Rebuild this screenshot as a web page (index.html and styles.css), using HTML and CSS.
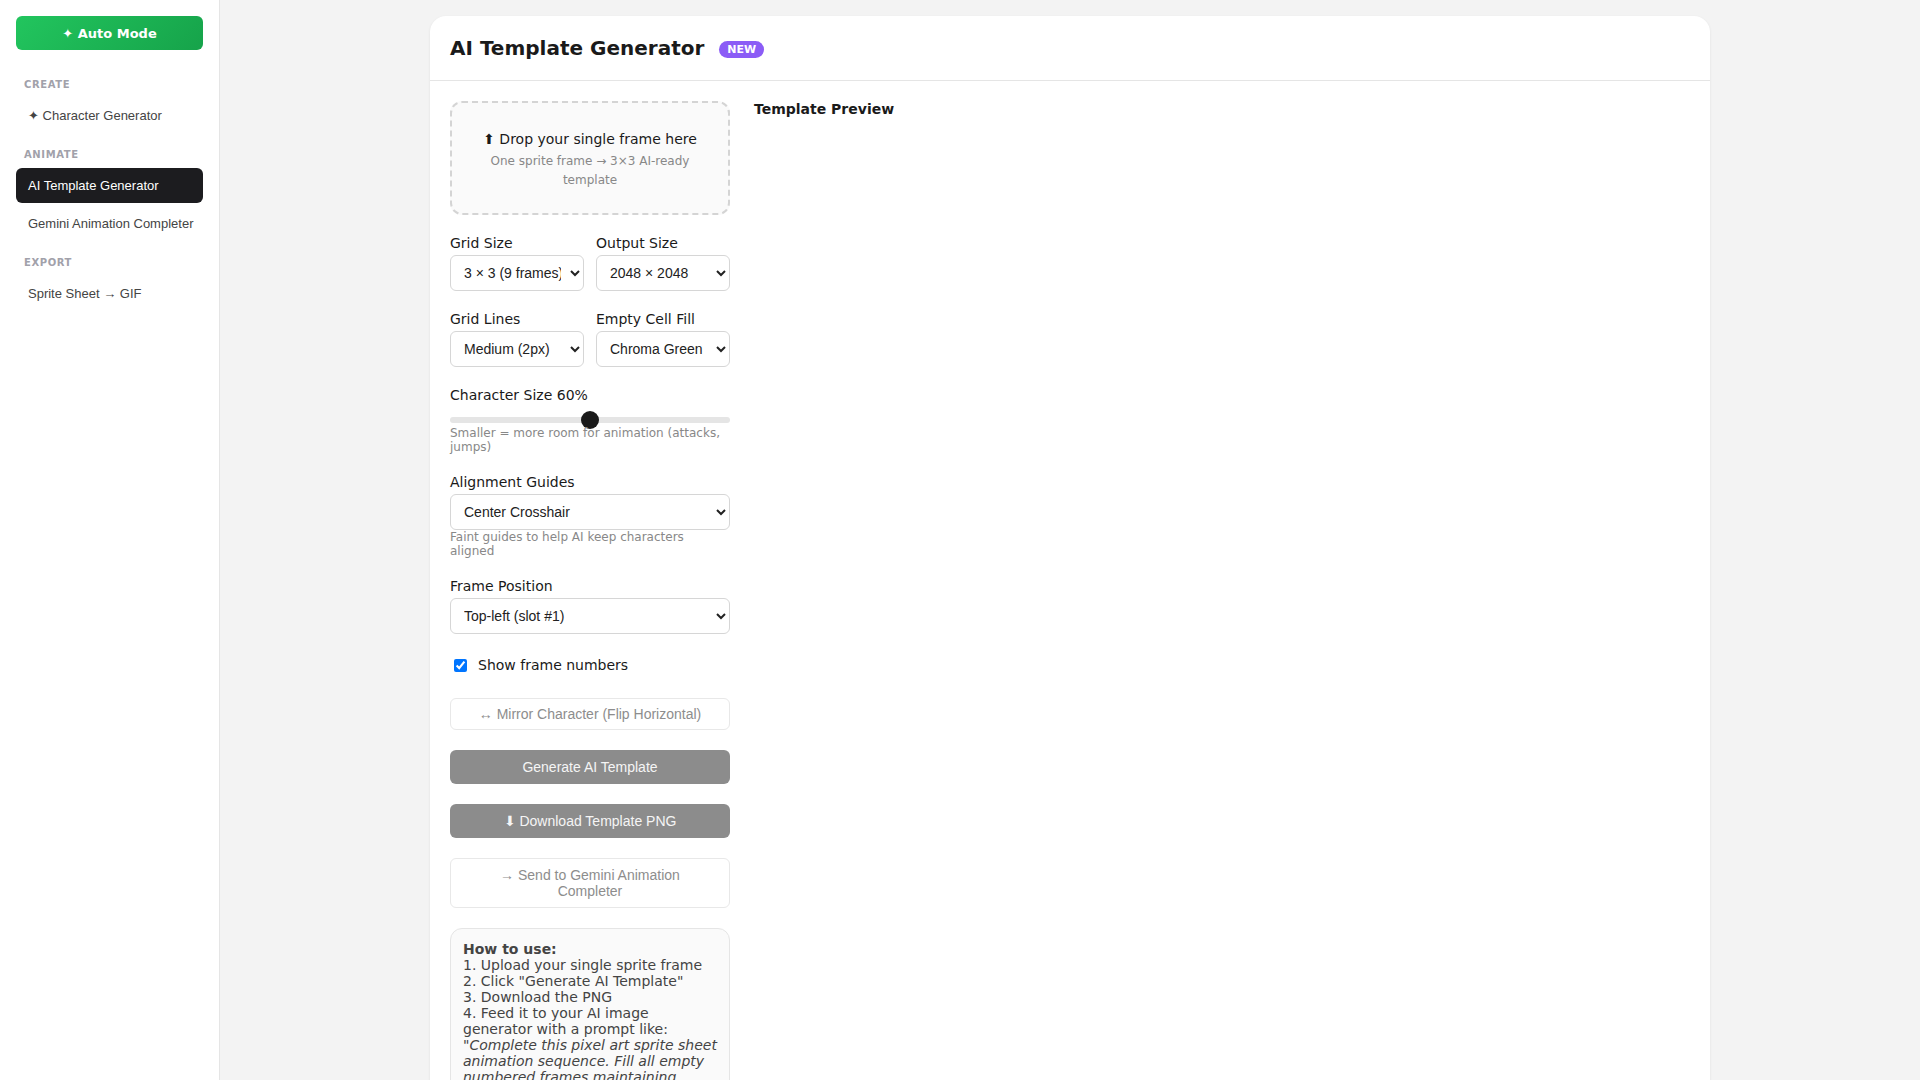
FILE: index.html
```html
<!DOCTYPE html>
<html lang="en">
<head>
  <meta charset="UTF-8" />
  <meta name="viewport" content="width=device-width, initial-scale=1.0"/>
  <title>AI Template Generator</title>
  <link rel="stylesheet" href="styles.css">
</head>
<body>
<div class="app">
  <aside class="sidebar">
    <button class="auto-mode">✦ Auto Mode</button>

    <div class="nav-heading first">CREATE</div>
    <div class="nav-item">✦ Character Generator</div>

    <div class="nav-heading">ANIMATE</div>
    <div class="nav-item active">AI Template Generator</div>
    <div class="nav-item">Gemini Animation Completer</div>

    <div class="nav-heading">EXPORT</div>
    <div class="nav-item">Sprite Sheet → GIF</div>
  </aside>

  <main class="main">
    <div class="card">
      <div class="card-header">
        <h1>AI Template Generator</h1>
        <span class="badge">NEW</span>
      </div>

      <div class="card-body">
        <div class="controls">
          <div class="dropzone">
            <div class="drop-title">⬆ Drop your single frame here</div>
            <div class="drop-sub">One sprite frame → 3×3 AI-ready template</div>
          </div>

          <div class="row">
            <div class="field">
              <label for="gridSize">Grid Size</label>
              <select id="gridSize">
                <option>3 × 3 (9 frames)</option>
                <option>4 × 4 (16 frames)</option>
              </select>
            </div>
            <div class="field">
              <label for="outputSize">Output Size</label>
              <select id="outputSize">
                <option>2048 × 2048</option>
                <option>1024 × 1024</option>
              </select>
            </div>
          </div>

          <div class="row">
            <div class="field">
              <label for="gridLines">Grid Lines</label>
              <select id="gridLines">
                <option>Medium (2px)</option>
                <option>Thin (1px)</option>
              </select>
            </div>
            <div class="field">
              <label for="emptyFill">Empty Cell Fill</label>
              <select id="emptyFill">
                <option>Chroma Green</option>
                <option>White</option>
              </select>
            </div>
          </div>

          <div class="field">
            <label for="charSize">Character Size 60%</label>
            <input type="range" id="charSize" min="20" max="100" value="60">
            <div class="hint">Smaller = more room for animation (attacks, jumps)</div>
          </div>

          <div class="field">
            <label for="guides">Alignment Guides</label>
            <select id="guides">
              <option>Center Crosshair</option>
              <option>None</option>
            </select>
            <div class="hint">Faint guides to help AI keep characters aligned</div>
          </div>

          <div class="field">
            <label for="framePos">Frame Position</label>
            <select id="framePos">
              <option>Top-left (slot #1)</option>
              <option>Center (slot #5)</option>
            </select>
          </div>

          <div class="check-row">
            <input type="checkbox" id="frameNumbers" checked>
            <label for="frameNumbers">Show frame numbers</label>
          </div>

          <button class="btn btn-outline" disabled>↔ Mirror Character (Flip Horizontal)</button>
          <button class="btn btn-dark" disabled>Generate AI Template</button>
          <button class="btn btn-dark" disabled>⬇ Download Template PNG</button>
          <button class="btn btn-outline btn-send" disabled>→ Send to Gemini Animation Completer</button>

          <div class="howto">
            <b>How to use:</b><br>
            1. Upload your single sprite frame<br>
            2. Click "Generate AI Template"<br>
            3. Download the PNG<br>
            4. Feed it to your AI image generator with a prompt like:<br>
            "<i>Complete this pixel art sprite sheet animation sequence. Fill all empty numbered frames maintaining consistent character design, style and proportions.</i>"
          </div>
        </div>

        <div class="preview">
          <h3>Template Preview</h3>
        </div>
      </div>
    </div>
  </main>
</div>
</body>
</html>
```

FILE: styles.css
```css
* {
  box-sizing: border-box;
}
body {
  margin: 0;
  font-family: "DejaVu Sans", sans-serif;
  color: #1a1a1a;
  background: #f3f3f3;
}
.app {
  display: flex;
  min-height: 100vh;
}
.sidebar {
  width: 220px;
  flex-shrink: 0;
  background: #fff;
  border-right: 1px solid #e5e5e5;
  padding: 16px;
}
.auto-mode {
  display: block;
  width: 100%;
  height: 34px;
  margin-bottom: 28px;
  border: none;
  border-radius: 6px;
  background: linear-gradient(135deg, #22c55e, #16a34a);
  color: #fff;
  font-family: "DejaVu Sans", sans-serif;
  font-size: 13px;
  font-weight: bold;
}
.nav-heading {
  font-size: 10px;
  line-height: 13px;
  font-weight: bold;
  letter-spacing: 0.6px;
  color: #a1a1aa;
  padding: 0 8px;
  margin: 15px 0 7px;
}
.nav-heading.first {
  margin-top: 0;
}
.nav-item {
  height: 35px;
  line-height: 35px;
  padding: 0 10px 0 12px;
  margin-bottom: 3px;
  border-radius: 6px;
  font-family: "Liberation Sans", Arial, sans-serif;
  font-size: 13px;
  color: #444;
  white-space: nowrap;
}
.nav-item.active {
  background: #1c1c1f;
  color: #fff;
}
.main {
  flex: 1;
  padding: 16px;
}
.card {
  max-width: 1280px;
  margin: 0 auto;
  background: #fff;
  border-radius: 16px;
  box-shadow: 0 1px 3px rgba(0,0,0,0.08);
  min-height: 1200px;
}
.card-header {
  display: flex;
  align-items: center;
  height: 65px;
  padding: 0 20px;
  border-bottom: 1px solid #e5e5e5;
}
.card-header h1 {
  margin: 0;
  font-size: 20px;
  font-weight: bold;
}
.badge {
  margin: 2px 0 0 15px;
  padding: 2px 8px;
  border-radius: 10px;
  background: #8b5cf6;
  color: #fff;
  font-size: 11px;
  font-weight: bold;
  line-height: 13px;
}
.card-body {
  display: grid;
  grid-template-columns: 280px 1fr;
  gap: 24px;
  padding: 20px;
}
.controls {
  display: flex;
  flex-direction: column;
}
.dropzone {
  border: 2px dashed #d4d4d4;
  border-radius: 12px;
  background: #fafafa;
  text-align: center;
  padding: 24px 16px 23px;
  margin-bottom: 20px;
}
.drop-title {
  font-size: 14px;
  line-height: 25px;
}
.drop-sub {
  font-size: 12px;
  line-height: 19px;
  color: #888;
}
.row {
  display: grid;
  grid-template-columns: 1fr 1fr;
  gap: 12px;
}
.field {
  display: flex;
  flex-direction: column;
  margin-bottom: 20px;
  min-width: 0;
}
.field label {
  font-size: 14px;
  margin-bottom: 4px;
}
select {
  height: 36px;
  width: 100%;
  padding: 0 6px 0 9px;
  border: 1px solid #d6d6d6;
  border-radius: 6px;
  background: #fff;
  font-family: "Liberation Sans", Arial, sans-serif;
  font-size: 14px;
  color: #222;
}
.hint {
  font-size: 12px;
  color: #888;
}
input[type=range] {
  -webkit-appearance: none;
  appearance: none;
  width: 100%;
  height: 6px;
  margin: 10px 0 3px;
  border-radius: 3px;
  background: #e5e5e5;
}
input[type=range]::-webkit-slider-thumb {
  -webkit-appearance: none;
  width: 18px;
  height: 18px;
  border-radius: 50%;
  background: #1a1a1a;
}
.check-row {
  display: flex;
  align-items: center;
  height: 22px;
  margin-bottom: 22px;
  font-size: 14px;
}
.check-row input {
  margin: 0 11px 0 4px;
  width: 13px;
  height: 13px;
}
.btn {
  width: 100%;
  margin-bottom: 20px;
  border-radius: 6px;
  font-family: "Liberation Sans", Arial, sans-serif;
  font-size: 14px;
  line-height: 16px;
}
.btn-outline {
  padding: 7px 20px;
  border: 1px solid #e8e8e8;
  background: #fff;
  color: #8d8d8d;
}
.btn-send {
  padding: 8px 20px;
}
.btn-dark {
  padding: 9px 20px;
  border: none;
  background: #8c8c8c;
  color: #f5f5f5;
}
.howto {
  border: 1px solid #e5e5e5;
  border-radius: 12px;
  background: #fafafa;
  padding: 12px;
  font-size: 14px;
  color: #444;
}
.preview h3 {
  margin: 0;
  font-size: 14px;
}
```
